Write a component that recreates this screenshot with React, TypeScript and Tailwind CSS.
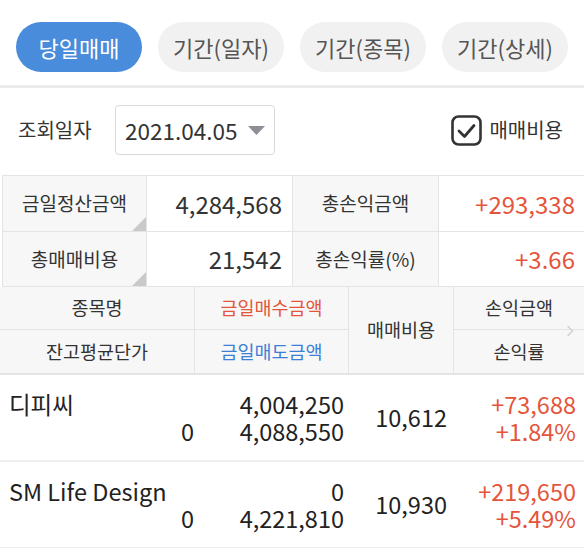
import { useState } from "react";

const tabs = ["당일매매", "기간(일자)", "기간(종목)", "기간(상세)"];

const rows = [
    { name: "디피씨", avg: "0", buy: "4,004,250", sell: "4,088,550", fee: "10,612", pl: "+73,688", rate: "+1.84%" },
    { name: "SM Life Design", avg: "0", buy: "0", sell: "4,221,810", fee: "10,930", pl: "+219,650", rate: "+5.49%" },
];

function Corner() {
    return (
        <span className="absolute right-0 bottom-0 w-[14px] h-[14px] bg-[#c9c9c9] [clip-path:polygon(100%_0,100%_100%,0_100%)]" />
    );
}

export default function App() {
    const [active, setActive] = useState(0);
    const [fee, setFee] = useState(true);

    return (
        <div className="w-[584px] h-[548px] overflow-hidden bg-white text-[#222] font-['Noto_Sans_CJK_KR','Noto_Sans',sans-serif]">
            {/* tabs */}
            <div className="flex gap-[16px] pl-[16px] pt-[22px] pb-[13px]">
                {tabs.map((t, i) => (
                    <button
                        key={t}
                        onClick={() => setActive(i)}
                        className={
                            i === active
                                ? "w-[126px] h-[50px] rounded-full bg-[#4a8cdc] text-white text-[22px] leading-none"
                                : "w-[126px] h-[50px] rounded-full bg-[#f1f1f1] text-[#555] text-[22px] leading-none"
                        }
                    >
                        {t}
                    </button>
                ))}
            </div>
            <div className="h-[3px] bg-[#ececec]" />

            {/* filter row */}
            <div className="flex items-center h-[50px] mt-[17px] pl-[18px] pr-[21px]">
                <span className="text-[20px] leading-none text-[#333] w-[97px]">조회일자</span>
                <div className="flex items-center w-[160px] h-[50px] border border-[#d9d9d9] rounded-[4px] pl-[9px]">
                    <span className="text-[22.5px] leading-none text-[#333]">2021.04.05</span>
                    <svg width="17" height="9" viewBox="0 0 17 9" className="ml-[11px]">
                        <polygon points="0,0 17,0 8.5,9" fill="#8d8f96" />
                    </svg>
                </div>
                <button onClick={() => setFee(!fee)} className="ml-auto flex items-center gap-[7px]">
                    <svg width="31" height="31" viewBox="0 0 31 31">
                        <rect x="1.5" y="1.5" width="28" height="28" rx="6" fill="none" stroke="#333" strokeWidth="2.6" />
                        {fee && <polyline points="8,16 13.5,21.5 23,10.5" fill="none" stroke="#333" strokeWidth="2.8" strokeLinecap="round" strokeLinejoin="round" />}
                    </svg>
                    <span className="text-[20px] leading-none text-[#333]">매매비용</span>
                </button>
            </div>

            {/* summary */}
            <div className="mt-[20px] ml-[2px] grid grid-cols-[144px_146px_146px_1fr] grid-rows-[56px_55px] border-t border-l border-[#e4e4e4]">
                <div className="relative flex items-center justify-center bg-[#f7f7f7] border-r border-b border-[#e4e4e4] text-[19px] text-[#333]">
                    금일정산금액
                    <Corner />
                </div>
                <div className="flex items-center justify-end pr-[10px] border-r border-b border-[#e4e4e4] text-[24px] text-[#333]">4,284,568</div>
                <div className="flex items-center justify-center bg-[#f7f7f7] border-r border-b border-[#e4e4e4] text-[19px] text-[#333]">총손익금액</div>
                <div className="flex items-center justify-end pr-[9px] border-b border-[#e4e4e4] text-[24px] text-[#e4553b]">+293,338</div>
                <div className="relative flex items-center justify-center bg-[#f7f7f7] border-r border-b border-[#e4e4e4] text-[19px] text-[#333]">
                    총매매비용
                    <Corner />
                </div>
                <div className="flex items-center justify-end pr-[10px] border-r border-b border-[#e4e4e4] text-[24px] text-[#333]">21,542</div>
                <div className="flex items-center justify-center bg-[#f7f7f7] border-r border-b border-[#e4e4e4] text-[19px] text-[#333]">총손익률(%)</div>
                <div className="flex items-center justify-end pr-[9px] border-b border-[#e4e4e4] text-[24px] text-[#e4553b]">+3.66</div>
            </div>

            {/* header */}
            <div className="relative grid grid-cols-[195px_154px_105px_1fr] grid-rows-[43px_43px] bg-[#f7f7f7] border-b-2 border-[#e4e4e4] text-[18.5px] text-[#333]">
                <div className="flex items-center justify-center border-r border-b border-[#e4e4e4]">종목명</div>
                <div className="flex items-center justify-center border-r border-b border-[#e4e4e4] text-[#e4553b]">금일매수금액</div>
                <div className="row-span-2 flex items-center justify-center border-r border-[#e4e4e4]">매매비용</div>
                <div className="flex items-center justify-center border-b border-[#e4e4e4]">손익금액</div>
                <div className="flex items-center justify-center border-r border-[#e4e4e4]">잔고평균단가</div>
                <div className="flex items-center justify-center border-r border-[#e4e4e4] text-[#3d7fd5]">금일매도금액</div>
                <div className="flex items-center justify-center">손익률</div>
                <svg width="8" height="12" viewBox="0 0 8 12" className="absolute right-[10px] top-[38px]">
                    <polyline points="1.5,1 6.5,6 1.5,11" fill="none" stroke="#cfcfcf" strokeWidth="1.3" />
                </svg>
            </div>

            {/* rows */}
            {rows.map((r) => (
                <div key={r.name} className="grid grid-cols-[195px_154px_105px_1fr] h-[87px] items-center border-b-2 border-[#eeeeee] text-[23.5px] leading-[27px] text-[#222]">
                    <div className="flex flex-col pl-[9px] pr-[1px]">
                        <span className="whitespace-nowrap">{r.name}</span>
                        <span className="text-right">{r.avg}</span>
                    </div>
                    <div className="flex flex-col items-end pr-[5px]">
                        <span>{r.buy}</span>
                        <span>{r.sell}</span>
                    </div>
                    <div className="text-right pr-[7px]">{r.fee}</div>
                    <div className="flex flex-col items-end pr-[8px] text-[#e4553b]">
                        <span>{r.pl}</span>
                        <span>{r.rate}</span>
                    </div>
                </div>
            ))}
        </div>
    );
}
